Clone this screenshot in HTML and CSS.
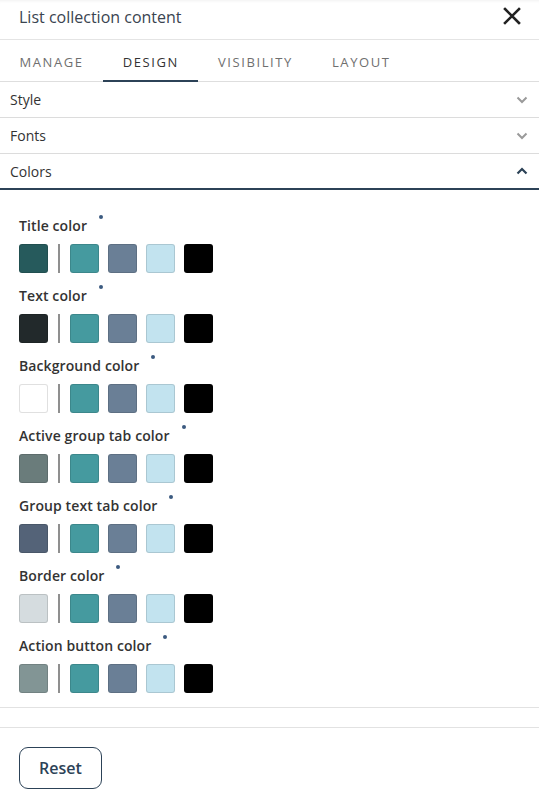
FILE: index.html
```html
<!DOCTYPE html>
<html lang="en">
<head>
  <meta charset="UTF-8" />
  <meta name="viewport" content="width=device-width, initial-scale=1.0"/>
  <title>List collection content</title>
  <link rel="stylesheet" href="styles.css">
</head>
<body>
  <div class="panel">
    <div class="panel-head">
      <span class="panel-title">List collection content</span>
      <button class="close-btn" type="button" aria-label="Close">
        <svg width="18" height="18" viewBox="0 0 18 18"><path d="M2 2 L16 16 M16 2 L2 16" stroke="#222" stroke-width="2.6" stroke-linecap="square"/></svg>
      </button>
    </div>

    <div class="tabs">
      <div class="tab">MANAGE</div>
      <div class="tab active">DESIGN</div>
      <div class="tab">VISIBILITY</div>
      <div class="tab">LAYOUT</div>
    </div>

    <div class="acc-row">
      <span>Style</span>
      <svg class="chev" width="12" height="8" viewBox="0 0 12 8"><path d="M1.5 1.5 L6 6 L10.5 1.5" fill="none" stroke="#9a9a9a" stroke-width="2"/></svg>
    </div>
    <div class="acc-row">
      <span>Fonts</span>
      <svg class="chev" width="12" height="8" viewBox="0 0 12 8"><path d="M1.5 1.5 L6 6 L10.5 1.5" fill="none" stroke="#9a9a9a" stroke-width="2"/></svg>
    </div>
    <div class="acc-row open">
      <span>Colors</span>
      <svg class="chev" width="12" height="8" viewBox="0 0 12 8"><path d="M1.5 6.5 L6 2 L10.5 6.5" fill="none" stroke="#2c4257" stroke-width="2.2"/></svg>
    </div>

    <div class="colors" id="colors"></div>

    <div class="spacer-row"></div>

    <div class="panel-foot">
      <button class="reset-btn" type="button">Reset</button>
    </div>
  </div>

  <script>
    const palette = ['#459a9f', '#6a7f96', '#c2e3ef', '#000000'];
    const groups = [
      { label: 'Title color', current: '#265a5c' },
      { label: 'Text color', current: '#22292b' },
      { label: 'Background color', current: '#ffffff' },
      { label: 'Active group tab color', current: '#6a7c7b' },
      { label: 'Group text tab color', current: '#546378' },
      { label: 'Border color', current: '#d5dcdf' },
      { label: 'Action button color', current: '#829595' }
    ];

    const box = document.getElementById('colors');
    groups.forEach(g => {
      const group = document.createElement('div');
      group.className = 'color-group';

      const label = document.createElement('div');
      label.className = 'color-label';
      label.innerHTML = g.label + '<span class="dot"></span>';
      group.appendChild(label);

      const row = document.createElement('div');
      row.className = 'swatch-row';

      const cur = document.createElement('span');
      cur.className = 'swatch';
      cur.style.background = g.current;
      row.appendChild(cur);

      const div = document.createElement('span');
      div.className = 'swatch-divider';
      row.appendChild(div);

      palette.forEach(c => {
        const s = document.createElement('span');
        s.className = 'swatch';
        s.style.background = c;
        row.appendChild(s);
      });

      group.appendChild(row);
      box.appendChild(group);
    });
  </script>
</body>
</html>
```

FILE: styles.css
```css
* {
  box-sizing: border-box;
}
body {
  margin: 0;
  font-family: "Open Sans", Arial, sans-serif;
  background: #fff;
  color: #333;
}
.panel {
  width: 539px;
  min-height: 812px;
  background: #fff;
  box-shadow: inset 0 3px 3px -2px rgba(0,0,0,0.06);
}
.panel-head {
  height: 40px;
  display: flex;
  align-items: center;
  justify-content: space-between;
  padding: 0 18px 5px 19px;
  border-bottom: 1px solid #e4e4e4;
}
.panel-title {
  font-size: 16px;
  color: #3a4450;
}
.close-btn {
  background: none;
  border: none;
  padding: 0;
  margin-top: -2px;
  cursor: pointer;
  display: flex;
}
.tabs {
  display: flex;
  height: 42px;
  padding-top: 3px;
  border-bottom: 1px solid #dedede;
}
.tab {
  padding: 0 19.5px;
  display: flex;
  align-items: center;
  font-size: 13px;
  letter-spacing: 1.6px;
  color: #6f6f6f;
  border-bottom: 2px solid transparent;
  margin-bottom: -1px;
}
.tab.active {
  color: #333;
  border-bottom-color: #2c4257;
}
.acc-row {
  height: 36px;
  display: flex;
  align-items: center;
  justify-content: space-between;
  padding: 0 11px 0 10px;
  font-size: 14px;
  color: #333;
  border-bottom: 1px solid #dcdcdc;
}
.acc-row.open {
  border-bottom: 2px solid #2c4257;
}
.colors {
  padding: 25px 19px 14px;
}
.color-group {
  margin-bottom: 12px;
}
.color-group:last-child {
  margin-bottom: 0;
}
.color-label {
  font-size: 14px;
  font-weight: 600;
  letter-spacing: 0.1px;
  color: #333;
  height: 20px;
  line-height: 20px;
  margin-bottom: 9px;
}
.dot {
  display: inline-block;
  width: 4px;
  height: 4px;
  border-radius: 50%;
  background: #3b5a80;
  margin-left: 12px;
  vertical-align: 12px;
}
.swatch-row {
  display: flex;
  align-items: center;
  gap: 9px;
  height: 29px;
}
.swatch {
  width: 29px;
  height: 29px;
  border-radius: 3px;
  border: 1px solid rgba(0,0,0,0.12);
}
.swatch-divider {
  width: 2px;
  height: 29px;
  background: #8f8f8f;
  margin: 0 1px 0 1px;
}
.spacer-row {
  height: 21px;
  border-top: 1px solid #e2e2e2;
  border-bottom: 1px solid #e2e2e2;
}
.panel-foot {
  padding: 19px 19px;
}
.reset-btn {
  width: 83px;
  height: 42px;
  border: 1px solid #2c4257;
  border-radius: 9px;
  background: #fff;
  font-family: "Open Sans", Arial, sans-serif;
  font-size: 16px;
  font-weight: 600;
  color: #2c4257;
  cursor: pointer;
}
```
